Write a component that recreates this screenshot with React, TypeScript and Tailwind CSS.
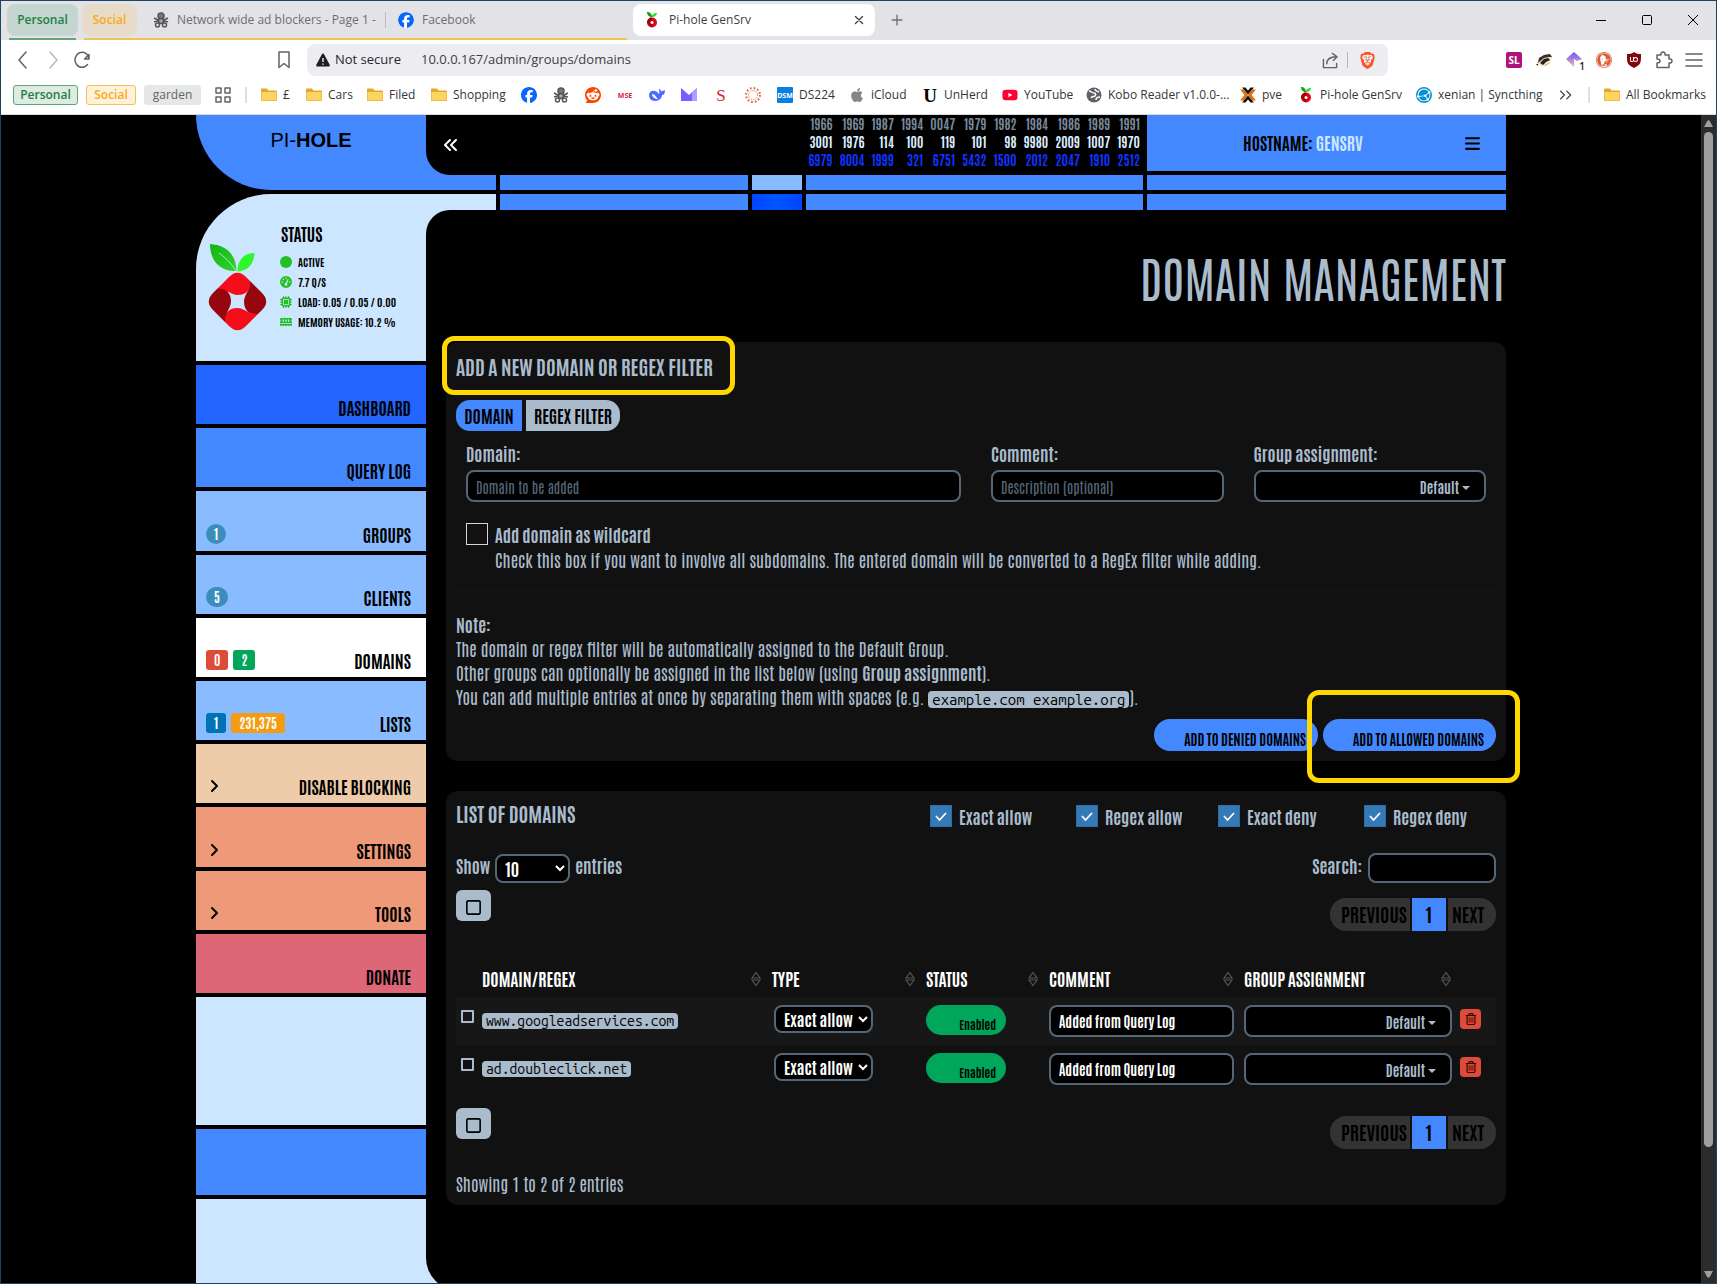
import type { ReactNode } from 'react';
import clsx from 'clsx';
import {
  FaAngleRight,
  FaAnglesLeft,
  FaApple,
  FaBars,
  FaCircle,
  FaFacebook,
  FaGaugeHigh,
  FaMemory,
  FaMicrochip,
  FaReddit,
  FaRegSquare,
  FaRegTrashCan,
  FaYoutube,
} from 'react-icons/fa6';
import { SiBrave, SiDuckduckgo, SiSyncthing, SiUblockorigin } from 'react-icons/si';

/* ---------- icons ---------- */

function PiholeLogo({ className }: { className?: string }) {
  const petal = 'M9 45 L21 33 Q29.5 24.500 38 33 L42 37 C43 45 39 51 29.5 51 C23 51 19 45 9 45z';
  return (
    <svg className={className} viewBox="0 0 59 87" aria-hidden="true">
      <defs>
        <linearGradient id="leaf" x1="0" y1="0" x2="1" y2="1">
          <stop offset="0" stopColor="#12b212" />
          <stop offset="1" stopColor="#2fd52f" />
        </linearGradient>
      </defs>
      <path d="M2 0C17 1 28 9 28.500 27L25 27C10 26 2 15 2 0z" fill="url(#leaf)" />
      <path d="M11 9C18 14 24 20 28 27" fill="none" stroke="#cce6ff" strokeWidth="0.8" />
      <path d="M46.500 9C46 20 40 27 29.500 27.500C29.500 16 36 9 46.500 9z" fill="#2cf82c" />
      <path d={petal} fill="#96060c" transform="rotate(90 29.500 57.500)" />
      <path d={petal} fill="#f60d1a" />
      <path d={petal} fill="#f60d1a" transform="rotate(180 29.500 57.500)" />
      <path d={petal} fill="#96060c" transform="rotate(270 29.500 57.500)" />
    </svg>
  );
}

function PiholeMark() {
  return (
    <svg className="size-4" viewBox="-2 0 16 16" aria-hidden="true">
      <path d="M1 0c3 0 5 2 5 5C3 5 1 3 1 0z" fill="#10a010" />
      <path d="M11 1c0 2-2 4-5 4 0-3 2-4 5-4z" fill="#2ce02c" />
      <circle cx="6" cy="10.500" r="5" fill="#e0061a" />
      <path d="M6 5.500a5 5 0 0 0-5 5L6 15.500z" fill="#96060c" />
      <circle cx="6" cy="10.500" r="1.500" fill="#fff" />
    </svg>
  );
}

function FolderIcon() {
  return (
    <svg className="size-4" viewBox="0 0 16 16" aria-hidden="true">
      <path d="M0 2.500Q0 1.500 1 1.500H6L7.500 3.500H15Q16 3.500 16 4.500V13Q16 14 15 14H1Q0 14 0 13z" fill="#e0a92e" />
      <path d="M.5 5H15.500V13.500H.5z" fill="#fcd462" />
    </svg>
  );
}

function EngineIcon() {
  return (
    <svg className="size-4" viewBox="0 0 16 16" aria-hidden="true" fill="none" stroke="#555" strokeWidth="1.500">
      <circle cx="8" cy="4" r="3" fill="#777" />
      <circle cx="8" cy="9" r="2.500" fill="#aaa" />
      <path d="M1 6l4 2M15 6l-4 2M1 10l4-1M15 10l-4-1" />
      <circle cx="4.500" cy="13" r="2" />
      <circle cx="11.500" cy="13" r="2" />
    </svg>
  );
}

function WhaleIcon() {
  return (
    <svg className="size-4" viewBox="0 0 16 16" aria-hidden="true">
      <path
        d="M0 8c0-3 3-5 6-4 2 .5 3 2 4 3 1-1 0-3 0-5 1 0 2 1 2 2 1 .5 2 0 4-1 0 3-1 5-3 5 0 3-3 6-7 6-4 0-6-3-6-6z"
        fill="#4d6bfe"
      />
      <path d="M3 7c3 0 4 3 6 5-3 0-6-2-6-5z" fill="#fff" />
    </svg>
  );
}

function MailIcon() {
  return (
    <svg className="size-4" viewBox="0 0 16 16" aria-hidden="true">
      <path d="M0 1l8 7 8-7v13H0z" fill="#7a5cff" />
      <path d="M11 6l5-5v13h-5z" fill="#b39cff" />
    </svg>
  );
}

function DottedCircleIcon() {
  return (
    <svg className="size-4" viewBox="0 0 16 16" aria-hidden="true" fill="none" stroke="#e06c3a">
      <circle cx="8" cy="8" r="7" strokeWidth="2" strokeDasharray="1.800 1.900" />
      <circle cx="8" cy="8" r="4.500" strokeDasharray="1 1" />
    </svg>
  );
}

function KoboIcon() {
  return (
    <svg className="size-4" viewBox="0 0 16 16" aria-hidden="true">
      <circle cx="8" cy="8" r="7.500" fill="#5f6368" />
      <path d="M3 4c2 0 3 2 5 2s2 2 1 3-3 0-4 2M9 2c0 2 2 2 4 3M10 13c0-2 1-3 4-3" stroke="#fff" strokeWidth="1.500" fill="none" />
    </svg>
  );
}

function ProxmoxIcon() {
  return (
    <svg className="size-4" viewBox="0 0 16 16" aria-hidden="true">
      <path d="M0 2.500h3.500L8 8l-4.500 5.500H0L4.500 8zM16 2.500h-3.500L8 8l4.500 5.500H16L11.500 8z" fill="#e57000" />
      <path d="M2 .5h3.500L8 3.500 10.500.5H14L8 7.500zM2 15.500h3.500L8 12.500l2.500 3H14L8 8.500z" fill="#111" />
    </svg>
  );
}

function BadgerIcon() {
  return (
    <svg className="size-4" viewBox="0 0 16 16" aria-hidden="true">
      <path d="M0 12L3 6l5-3 6-1 2 3-2 6-5 3-8-1z" fill="#f3e3c8" />
      <path d="M3 6l5-3 6-1 2 3-3 0-5 1-6 5z" fill="#3b3028" />
      <path d="M4 11l4-4 4-1 2 2-4 2-3 3z" fill="#222" />
      <path d="M0 12l2 0 0 2z" fill="#222" />
      <path d="M9 13l4-2 1 0-5 3z" fill="#d89a3a" />
    </svg>
  );
}

function PrismIcon() {
  return (
    <svg className="size-4" viewBox="0 0 16 16" aria-hidden="true">
      <defs>
        <linearGradient id="prism" x1="0" y1="0" x2="0" y2="1">
          <stop offset="0" stopColor="#5b5bff" />
          <stop offset="1" stopColor="#ffb3b3" />
        </linearGradient>
      </defs>
      <path d="M8 0l8 7-5 2-3-2v8L0 7z" fill="url(#prism)" />
    </svg>
  );
}

function LetterIcon({ children, className }: { children: ReactNode; className: string }) {
  return (
    <span className={clsx('flex size-4 items-center justify-center leading-none', className)} aria-hidden="true">
      {children}
    </span>
  );
}

type LineProps = { className?: string; d: string };

function Line({ className, d }: LineProps) {
  return (
    <svg
      className={className}
      viewBox="0 0 18 18"
      fill="none"
      stroke="currentColor"
      strokeWidth="1.500"
      strokeLinejoin="round"
      strokeLinecap="round"
      aria-hidden="true"
    >
      <path d={d} />
    </svg>
  );
}

/* ---------- browser window ---------- */

function TabStrip() {
  return (
    <div className="flex h-[39px] items-start bg-[#e3e2e7] pt-[3px] pl-[6px] text-[12px] text-[#6d6e73]">
      <div className="flex h-9 w-[71px] flex-col justify-between">
        <button className="h-8 rounded-lg bg-[#c5d5d0] font-semibold text-[#1e8040]">Personal</button>
        <span className="mx-[2px] h-[2px] bg-[#5fa777]" />
      </div>
      <div className="ml-1 flex h-9 w-[545px] flex-col justify-between">
        <div className="flex h-8 items-center whitespace-nowrap">
          <button className="h-8 w-[55px] rounded-lg bg-[#e6dcc9] font-semibold text-[#f9ab14]">Social</button>
          <button className="ml-4 flex items-center gap-2">
            <EngineIcon />
            <span className="w-[203px] text-left">Network wide ad blockers - Page 1 -</span>
          </button>
          <span className="ml-[5px] h-4 w-px bg-[#bdbcc2]" />
          <button className="ml-3 flex items-center gap-2">
            <FaFacebook className="size-4 rounded-full bg-white text-[#0866ff]" />
            Facebook
          </button>
        </div>
        <span className="ml-[2px] h-[2px] bg-[#f0c24f]" />
      </div>
      <div className="ml-[6px] flex h-8 w-[242px] items-center rounded-lg bg-white pr-2 pl-[11px] text-[#404145]">
        <PiholeMark />
        <span className="ml-[9px] flex-1">Pi-hole GenSrv</span>
        <button className="flex size-4 items-center justify-center" aria-label="Close tab">
          <Line className="size-4" d="M5 5l8 8M13 5l-8 8" />
        </button>
      </div>
      <button className="ml-3 flex h-8 w-5 items-center justify-center" aria-label="New tab">
        <Line className="size-4" d="M9 3.500v11M3.500 9h11" />
      </button>
      <div className="ml-auto flex h-8 items-center gap-[30px] pr-[15px] text-black">
        <button aria-label="Minimize">
          <svg className="size-4" viewBox="0 0 16 16">
            <path d="M3 8.500h10" stroke="currentColor" />
          </svg>
        </button>
        <button aria-label="Maximize">
          <svg className="size-4" viewBox="0 0 16 16">
            <rect x="3.500" y="3.500" width="9" height="9" rx="1" fill="none" stroke="currentColor" />
          </svg>
        </button>
        <button aria-label="Close">
          <svg className="size-4" viewBox="0 0 16 16">
            <path d="M3 3l10 10M13 3L3 13" stroke="currentColor" />
          </svg>
        </button>
      </div>
    </div>
  );
}

function Toolbar() {
  return (
    <div className="flex h-10 items-center bg-white pr-[14px] pl-[13px] text-[#5f6368]">
      <button className="w-5" aria-label="Back">
        <Line className="size-[18px]" d="M12 1L5 9l7 8" />
      </button>
      <button className="ml-[10px] w-5 text-[#b9babd]" aria-label="Forward">
        <Line className="size-[18px]" d="M6 1l7 8-7 8" />
      </button>
      <button className="ml-[9px]" aria-label="Reload">
        <Line className="size-[18px]" d="M16 8A7 7.500 0 1 0 14.500 13.500M16 3.500v4.500h-4.500z" />
      </button>
      <button className="ml-[184px]" aria-label="Bookmark this page">
        <Line className="size-[18px]" d="M4 1h10v15.500l-5-4-5 4z" />
      </button>
      <div className="ml-[14px] flex h-8 w-[1081px] items-center rounded-lg bg-[#edecf1] pr-3 pl-[9px] text-[13px] text-[#27282b]">
        <svg className="size-[14px]" viewBox="0 0 14 14" aria-hidden="true">
          <path d="M7 .5Q7.700.5 8.200 1.500L13.800 12Q14 13.500 12.800 13.500H1.200Q0 13.500.2 12L5.800 1.500Q6.300.5 7 .5z" fill="#1f1f23" />
          <path d="M7 5v4M7 10.500v1.300" stroke="#fff" strokeWidth="1.300" />
        </svg>
        <span className="ml-[5px] w-[86px]">Not secure</span>
        <input
          className="min-w-0 flex-1 bg-transparent text-[#3f4043] outline-none"
          aria-label="Address"
          defaultValue="10.0.0.167/admin/groups/domains"
        />
        <button className="text-[#5f6368]" aria-label="Share">
          <Line className="size-[17px]" d="M1.500 8v8.500h14V12M5 12.500c0-5 3-7 9-7.500M11 1.500l5 3.500-4 4" />
        </button>
        <span className="mx-2 h-4 w-px bg-[#b5b5ba]" />
        <button className="ml-[3px]" aria-label="Brave Shields">
          <SiBrave className="size-[17px] text-[#fb542b]" />
        </button>
      </div>
      <div className="ml-auto flex items-center gap-[14px]">
        <LetterIcon className="rounded-[2px] bg-[#b0127b] text-[10px] font-bold text-white">SL</LetterIcon>
        <BadgerIcon />
        <span className="relative">
          <PrismIcon />
          <span className="absolute top-[7px] right-[-3px] text-[10px] font-semibold text-[#27282b]">1</span>
        </span>
        <SiDuckduckgo className="size-4 text-[#de5833]" />
        <SiUblockorigin className="size-4 text-[#800610]" />
        <button className="-mx-px" aria-label="Extensions">
          <Line className="size-[18px]" d="M2 4h4c-1-4 5-4 4 0h4v4c4-1 4 5 0 4v4.500H2v-4.500c4 0 4-4 0-4z" />
        </button>
        <button className="-mx-px" aria-label="Menu">
          <Line className="size-[18px]" d="M1 3h16M1 9h16M1 15h16" />
        </button>
      </div>
    </div>
  );
}

type Bookmark = { id: string; icon: ReactNode; label?: string; width?: string };

const BOOKMARKS: Bookmark[] = [
  { id: 'pound', icon: <FolderIcon />, label: '£', width: 'w-[7px]' },
  { id: 'cars', icon: <FolderIcon />, label: 'Cars', width: 'w-[23px]' },
  { id: 'filed', icon: <FolderIcon />, label: 'Filed', width: 'w-[26px]' },
  { id: 'shopping', icon: <FolderIcon />, label: 'Shopping', width: 'w-[52px]' },
  { id: 'facebook', icon: <FaFacebook className="size-4 text-[#0866ff]" /> },
  { id: 'engine', icon: <EngineIcon /> },
  { id: 'reddit', icon: <FaReddit className="size-4 text-[#ff4500]" /> },
  { id: 'mse', icon: <LetterIcon className="text-[7px] font-bold text-[#d81e3a]">MSE</LetterIcon> },
  { id: 'whale', icon: <WhaleIcon /> },
  { id: 'mail', icon: <MailIcon /> },
  {
    id: 's',
    icon: <LetterIcon className="font-['Liberation_Serif',serif] text-[17px] text-[#d8232f]">S</LetterIcon>,
  },
  { id: 'dots', icon: <DottedCircleIcon /> },
  {
    id: 'ds224',
    icon: <LetterIcon className="rounded-[1px] bg-[#0b7fe0] text-[7px] font-bold text-white">DSM</LetterIcon>,
    label: 'DS224',
    width: 'w-[34px]',
  },
  { id: 'icloud', icon: <FaApple className="size-4 text-[#85868a]" />, label: 'iCloud', width: 'w-[35px]' },
  {
    id: 'unherd',
    icon: <LetterIcon className="font-['Liberation_Serif',serif] text-[19px] font-bold text-black">U</LetterIcon>,
    label: 'UnHerd',
    width: 'w-[42px]',
  },
  { id: 'youtube', icon: <FaYoutube className="size-4 text-[#f03]" />, label: 'YouTube', width: 'w-[46px]' },
  { id: 'kobo', icon: <KoboIcon />, label: 'Kobo Reader v1.0.0-...', width: 'w-[116px]' },
  { id: 'pve', icon: <ProxmoxIcon />, label: 'pve', width: 'w-[20px]' },
  { id: 'pihole', icon: <PiholeMark />, label: 'Pi-hole GenSrv', width: 'w-[80px]' },
  {
    id: 'syncthing',
    icon: <SiSyncthing className="size-4 text-[#0891d1]" />,
    label: 'xenian | Syncthing',
    width: 'w-[96px]',
  },
];

function BookmarksBar() {
  return (
    <div className="flex h-[35px] items-center border-b border-[#dadade] bg-white pr-[15px] pb-1 pl-3 text-[12px] whitespace-nowrap text-[#35363a]">
      <a href="#" className="flex h-5 w-[65px] items-center justify-center rounded-[3px] border border-[#5fa777] bg-[#deebe2] font-semibold text-[#1e8040]">
        Personal
      </a>
      <a href="#" className="ml-2 flex h-5 w-[50px] items-center justify-center rounded-[3px] border border-[#f0c24f] bg-[#fdf1dc] font-semibold text-[#f9ab14]">
        Social
      </a>
      <a href="#" className="ml-2 flex h-5 w-[57px] items-center justify-center rounded-[3px] bg-[#e6e8e7] text-[#5f6368]">
        garden
      </a>
      <Line
        className="ml-[13px] size-[18px] text-[#5f6368]"
        d="M2 2h5v5H2zM11 2h5v5h-5zM2 11h5v5H2zM11 11h5v5h-5z"
      />
      <span className="mr-[14px] ml-[13px] h-4 w-[2px] bg-[#dfdfe3]" />
      <div className="flex flex-1 items-center gap-4">
        {BOOKMARKS.map(({ id, icon, label, width }) => (
          <a key={id} href="#" className="flex items-center gap-[6px]" aria-label={label ?? id}>
            {icon}
            {label && <span className={width}>{label}</span>}
          </a>
        ))}
      </div>
      <button className="mr-[15px]" aria-label="More bookmarks">
        <Line className="size-[14px] text-[#35363a]" d="M2 4l5 5-5 5M10 4l5 5-5 5" />
      </button>
      <span className="mr-[14px] h-4 w-[2px] bg-[#dfdfe3]" />
      <a href="#" className="flex items-center gap-[6px]">
        <FolderIcon />
        <span className="w-[75px]">All Bookmarks</span>
      </a>
    </div>
  );
}

function Scrollbar() {
  return (
    <div className="flex w-[15px] flex-col items-center bg-[#2c2c2c] py-1" aria-hidden="true">
      <svg className="h-2 w-[9px]" viewBox="0 0 9 8">
        <path d="M0 8L3.500 1.500h2L9 8z" fill="#9f9f9f" />
      </svg>
      <span className="mt-[5px] h-[1015px] w-[9px] rounded-full bg-[#9f9f9f]" />
      <svg className="mt-auto h-2 w-[9px]" viewBox="0 0 9 8">
        <path d="M0 0h9L5.500 6.500h-2z" fill="#9f9f9f" />
      </svg>
    </div>
  );
}

/* ---------- pi-hole header ---------- */

const DATA_ROWS = [
  {
    color: 'text-[#778899]',
    values: ['1966', '1969', '1987', '1994', '0047', '1979', '1982', '1984', '1986', '1989', '1991'],
  },
  {
    color: 'text-[#ddeeff]',
    values: ['3001', '1976', '114', '100', '119', '101', '98', '9980', '2009', '1007', '1970'],
  },
  {
    color: 'text-[#1133ff]',
    values: ['6979', '8004', '1999', '321', '6751', '5432', '1500', '2012', '2047', '1910', '2512'],
  },
];

function Bars({ lower }: { lower?: boolean }) {
  return (
    <div className={clsx('flex gap-1', lower ? 'h-4' : 'h-[15px]')}>
      <span className={clsx('w-[70px]', lower ? 'bg-[#cce6ff]' : 'bg-[#4488ff]')} />
      <span className="flex-1 bg-[#4488ff]" />
      <span className={clsx('w-[50px]', lower ? 'bg-linear-to-r from-[#0044ff] via-[#0055ff] to-[#0044ff]' : 'bg-[#88bbff]')} />
      <span className="w-[337px] bg-[#4488ff]" />
      <span className="w-[359px] bg-[#4488ff]" />
    </div>
  );
}

function Header() {
  return (
    <header className="flex">
      <div className="h-[75px] w-[230px] rounded-bl-[75px] bg-[#4488ff] text-center font-['Liberation_Sans',sans-serif] text-[20px] leading-[50px] text-black">
        PI-<b>HOLE</b>
      </div>
      <div className="flex-1">
        <div className="flex">
          <div className="flex-1 bg-[#4488ff]">
            <div className="flex h-[60px] justify-between rounded-bl-[24px] bg-black pr-[7px] pl-[17px]">
              <button className="h-[60px] text-white" aria-label="Toggle sidebar">
                <FaAnglesLeft className="size-4" />
              </button>
              <table className="h-[54px] text-right text-[13px] leading-[18px] font-bold">
                <tbody>
                  {DATA_ROWS.map(({ color, values }) => (
                    <tr key={values[0]} className={color}>
                      {values.map((value) => (
                        <td key={value} className="py-0 pr-0 pl-[7px]">
                          {value}
                        </td>
                      ))}
                    </tr>
                  ))}
                </tbody>
              </table>
            </div>
          </div>
          <div className="flex h-14 w-[359px] items-center bg-[#4488ff] pr-[25px] text-[17px] font-bold text-black">
            <span className="flex-1 pl-[96px]">
              HOSTNAME: <span className="text-[#cce6ff]">GENSRV</span>
            </span>
            <button aria-label="Open menu">
              <FaBars className="size-[17px]" />
            </button>
          </div>
        </div>
        <Bars />
      </div>
    </header>
  );
}

/* ---------- sidebar ---------- */

const STATUS = [
  { icon: <FaCircle className="size-3" />, text: 'ACTIVE' },
  { icon: <FaGaugeHigh className="size-3" />, text: '7.7 Q/S' },
  { icon: <FaMicrochip className="size-3" />, text: 'LOAD: 0.05 / 0.05 / 0.00' },
  { icon: <FaMemory className="size-3" />, text: 'MEMORY USAGE: 10.2 %' },
];

type NavItem = {
  label: string;
  bg: string;
  arrow?: boolean;
  badges?: { text: string; cls: string }[];
};

const NAV: NavItem[] = [
  { label: 'Dashboard', bg: 'bg-[#2266ff]' },
  { label: 'Query Log', bg: 'bg-[#4488ff]' },
  { label: 'Groups', bg: 'bg-[#88bbff]', badges: [{ text: '1', cls: 'rounded-full bg-[#3c8dbc]' }] },
  { label: 'Clients', bg: 'bg-[#88bbff]', badges: [{ text: '5', cls: 'rounded-full bg-[#3c8dbc]' }] },
  {
    label: 'Domains',
    bg: 'bg-white',
    badges: [
      { text: '0', cls: 'rounded-[3px] bg-[#dd4b39]' },
      { text: '2', cls: 'rounded-[3px] bg-[#00a65a]' },
    ],
  },
  {
    label: 'Lists',
    bg: 'bg-[#88bbff]',
    badges: [
      { text: '1', cls: 'rounded-[3px] bg-[#0073b7]' },
      { text: '231,375', cls: 'rounded-[3px] bg-[#f39c12]' },
    ],
  },
  { label: 'Disable Blocking', bg: 'bg-[#eeccaa]', arrow: true },
  { label: 'Settings', bg: 'bg-[#ee9977]', arrow: true },
  { label: 'Tools', bg: 'bg-[#ee9977]', arrow: true },
  { label: 'Donate', bg: 'bg-[#dd6677]' },
];

function Sidebar() {
  return (
    <aside className="flex w-[230px] flex-col gap-1 text-black uppercase">
      <section className="flex h-[167px] rounded-tl-[75px] bg-[#cce6ff] pt-5 pl-3">
        <PiholeLogo className="mt-[30px] h-[87px] w-[59px]" />
        <div className="ml-[13px]">
          <h2 className="pl-px text-[17px] leading-[38px] font-bold">Status</h2>
          <ul className="text-[11px] leading-5 font-bold">
            {STATUS.map(({ icon, text }) => (
              <li key={text} className="flex items-center gap-[6px]">
                <span className="text-[#22c022]">{icon}</span>
                {text}
              </li>
            ))}
          </ul>
        </div>
      </section>
      <nav className="grid h-[628px] grid-rows-10 gap-1">
        {NAV.map(({ label, bg, arrow, badges }) => (
          <a key={label} href="#" className={clsx('flex items-end justify-between pr-[15px] pb-[5px] pl-[10px]', bg)}>
            <span className="flex h-6 items-center gap-[5px]">
              {arrow && <FaAngleRight className="size-4" />}
              {badges?.map(({ text, cls }) => (
                <span
                  key={text}
                  className={clsx('h-5 px-2 text-[13px] leading-[19px] font-bold text-white', cls)}
                >
                  {text}
                </span>
              ))}
            </span>
            <span className="text-[17px] leading-6 font-bold">{label}</span>
          </a>
        ))}
      </nav>
      <span className="h-32 bg-[#cce6ff]" />
      <span className="h-[66px] bg-[#4488ff]" />
      <span className="h-[91px] bg-[#cce6ff]" />
    </aside>
  );
}

/* ---------- form pieces ---------- */

const field = 'w-full rounded-lg border-2 border-[#556677] bg-black';

function GroupSelect({ id, label }: { id: string; label?: string }) {
  return (
    <div className="grid items-center">
      <select
        id={id}
        aria-label={label}
        className={clsx(
          field,
          'h-8 appearance-none pt-[2px] pr-[25px] text-[14px] font-bold text-[#aabbcc] [grid-area:1/1] [text-align-last:right]',
        )}
      >
        <option>Default</option>
      </select>
      <svg className="pointer-events-none mt-1 mr-4 h-1 w-2 justify-self-end [grid-area:1/1]" viewBox="0 0 8 4">
        <path d="M0 0h8L4 4z" fill="#aabbcc" />
      </svg>
    </div>
  );
}

function FilterCheckbox({ id, label }: { id: string; label: string }) {
  return (
    <div className="flex items-center gap-[7px]">
      <span className="grid place-items-center">
        <input
          id={id}
          type="checkbox"
          defaultChecked
          className="size-[22px] appearance-none border border-[#2e6da4] bg-[#337ab7] [grid-area:1/1]"
        />
        <svg className="pointer-events-none size-3 [grid-area:1/1]" viewBox="0 0 12 12">
          <path d="M1 6l3.500 4L11 3" fill="none" stroke="#fff" strokeWidth="1.800" />
        </svg>
      </span>
      <label htmlFor={id} className="text-[17px] leading-6 font-bold">
        {label}
      </label>
    </div>
  );
}

function Pagination() {
  return (
    <div className="mt-2 flex h-[33px] gap-[2px] text-[19px] font-bold text-black">
      <button disabled className="w-20 rounded-l-2xl bg-[#333] pl-2 uppercase">
        Previous
      </button>
      <button className="w-[34px] bg-[#4488ff]">1</button>
      <button disabled className="w-12 rounded-r-2xl bg-[#333] pr-2 uppercase">
        Next
      </button>
    </div>
  );
}

function TableActions() {
  return (
    <div className="flex items-start justify-between">
      <button className="flex h-[31px] w-[35px] items-center justify-center rounded-md bg-[#aabbcc] pt-1 text-black" aria-label="Select all">
        <FaRegSquare className="size-[17px]" />
      </button>
      <Pagination />
    </div>
  );
}

/* ---------- panels ---------- */

function Code({ children, className }: { children: ReactNode; className: string }) {
  return (
    <code className={clsx("rounded-[4px] bg-[#aabbcc] px-1 font-['Ubuntu_Mono','DejaVu_Sans_Mono',monospace] leading-[18px] text-black", className)}>
      {children}
    </code>
  );
}

function AddDomainPanel() {
  return (
    <section className="relative rounded-xl bg-[#111] p-[10px]">
      <h2 className="mb-[20px] text-[20px] leading-[28px] font-bold uppercase">Add a new domain or regex filter</h2>
      <div className="flex h-[31px] gap-1 text-[17px] font-bold text-black">
        <button className="w-[66px] rounded-l-[14px] bg-[#4488ff] uppercase">Domain</button>
        <button className="w-[94px] rounded-r-[14px] bg-[#aabbcc] uppercase">Regex filter</button>
      </div>
      <form className="mt-[10px]">
        <div className="grid grid-cols-4 gap-x-[30px] px-[10px]">
          <div className="col-span-2">
            <label htmlFor="domain" className="mb-[5px] block leading-6 font-bold">
              Domain:
            </label>
            <input
              id="domain"
              placeholder="Domain to be added"
              className={clsx(field, 'block h-8 px-2 pt-[2px] text-[14px] placeholder:text-[#556677]')}
            />
          </div>
          <div>
            <label htmlFor="comment" className="mb-[5px] block leading-6 font-bold">
              Comment:
            </label>
            <input
              id="comment"
              placeholder="Description (optional)"
              className={clsx(field, 'block h-8 px-2 pt-[2px] text-[14px] placeholder:text-[#556677]')}
            />
          </div>
          <div>
            <label htmlFor="group" className="mb-[5px] block leading-6 font-bold">
              Group assignment:
            </label>
            <GroupSelect id="group" />
          </div>
        </div>
        <div className="mt-[19px] flex gap-[7px] px-[10px]">
          <input id="wildcard" type="checkbox" className="mt-[2px] size-[22px] appearance-none border border-[#d2d6de]" />
          <div>
            <label htmlFor="wildcard" className="block leading-[26px] font-bold">
              Add domain as wildcard
            </label>
            <p className="leading-6">
              Check this box if you want to involve all subdomains. The entered domain will be converted to a RegEx
              filter while adding.
            </p>
          </div>
        </div>
        <hr className="mt-5 mb-5 border-[#151515]" />
        <div className="leading-6">
          <p className="font-bold">Note:</p>
          <p>The domain or regex filter will be automatically assigned to the Default Group.</p>
          <p>
            Other groups can optionally be assigned in the list below (using <b>Group assignment</b>).
          </p>
          <p>
            You can add multiple entries at once by separating them with spaces (e.g.{' '}
            <Code className="text-[15px]">example.com example.org</Code>).
          </p>
        </div>
        <div className="mt-[10px] flex justify-end gap-[5px] text-[14px] font-bold text-black">
          <button type="button" className="h-8 w-[164px] rounded-2xl bg-[#4488ff] pt-2 pr-3 text-right uppercase">
            Add to denied domains
          </button>
          <button type="button" className="h-8 w-[173px] rounded-2xl bg-[#4488ff] pt-2 pr-3 text-right uppercase">
            Add to allowed domains
          </button>
        </div>
      </form>
      <span className="pointer-events-none absolute top-[-6px] left-[-4px] h-[59px] w-[293px] rounded-xl border-5 border-[#ffd800]" />
      <span className="pointer-events-none absolute right-[-14px] bottom-[-22px] h-[93px] w-[213px] rounded-xl border-5 border-[#ffd800]" />
    </section>
  );
}

const COLUMNS = [
  { label: 'Domain/Regex', width: 'w-[290px]' },
  { label: 'Type', width: 'w-[154px]' },
  { label: 'Status', width: 'w-[123px]' },
  { label: 'Comment', width: 'w-[195px]' },
  { label: 'Group assignment', width: 'w-[218px]' },
];

const DOMAINS = ['www.googleadservices.com', 'ad.doubleclick.net'];

function SortIcon() {
  return (
    <svg className="h-4 w-[10px]" viewBox="0 0 10 16" fill="none" stroke="#555" strokeWidth="1.200" aria-hidden="true">
      <path d="M1 7l4-5.500L9 7zM1 9l4 5.500L9 9z" />
    </svg>
  );
}

function DomainTable() {
  return (
    <table className="mt-[30px] mb-[15px] w-full table-fixed text-left">
      <thead>
        <tr className="h-9 text-[17px] text-white uppercase">
          <th className="w-[21px] p-0" aria-label="Select" />
          {COLUMNS.map(({ label, width }) => (
            <th key={label} className={clsx('py-0 pr-[6px] pl-[5px] font-bold', width)}>
              <span className="flex items-center justify-between">
                {label}
                <SortIcon />
              </span>
            </th>
          ))}
          <th className="p-0" aria-label="Actions" />
        </tr>
      </thead>
      <tbody>
        {DOMAINS.map((domain) => (
          <tr key={domain} className="h-12 odd:bg-[#171717] [&>td]:px-[5px] [&>td]:pt-2 [&>td]:align-top">
            <td>
              <input
                type="checkbox"
                aria-label={`Select ${domain}`}
                className="mt-[5px] block size-[13px] appearance-none rounded-[1px] border-2 border-[#aabbcc]"
              />
            </td>
            <td>
              <Code className="text-[14px]">{domain}</Code>
            </td>
            <td>
              <select
                aria-label={`Type of ${domain}`}
                className="ml-[2px] block h-[28px] w-[99px] rounded-lg border-2 border-[#556677] bg-black pl-1 text-[16px] font-bold text-white"
              >
                <option>Exact allow</option>
              </select>
            </td>
            <td>
              <button className="block h-[30px] w-20 rounded-2xl bg-[#00a65a] pt-2 pr-[10px] text-right text-[12px] font-bold text-black">
                Enabled
              </button>
            </td>
            <td>
              <input
                aria-label={`Comment for ${domain}`}
                defaultValue="Added from Query Log"
                className={clsx(field, 'block h-8 px-2 text-[14px] font-bold text-white')}
              />
            </td>
            <td>
              <GroupSelect id={`group-${domain}`} label={`Groups of ${domain}`} />
            </td>
            <td>
              <button
                className="mt-1 ml-[-2px] flex h-5 w-[21px] items-center justify-center rounded-[4px] bg-[#dd4b39] text-[#300]"
                aria-label={`Delete ${domain}`}
              >
                <FaRegTrashCan className="size-3" />
              </button>
            </td>
          </tr>
        ))}
      </tbody>
    </table>
  );
}

function DomainListPanel() {
  return (
    <section className="mt-[30px] rounded-xl bg-[#111] px-[10px] pt-[7px] pb-[10px]">
      <div className="mb-[25px] flex h-[30px] items-center justify-between">
        <h2 className="text-[20px] leading-[30px] font-bold uppercase">List of domains</h2>
        <div className="grid grid-cols-[146px_142px_146px_132px] pt-[6px]">
          <FilterCheckbox id="exact-allow" label="Exact allow" />
          <FilterCheckbox id="regex-allow" label="Regex allow" />
          <FilterCheckbox id="exact-deny" label="Exact deny" />
          <FilterCheckbox id="regex-deny" label="Regex deny" />
        </div>
      </div>
      <div className="mb-[7px] flex h-[30px] items-center justify-between font-bold">
        <label className="flex items-center gap-[5px]">
          <span className="pb-1">Show</span>
          <select className="h-[29px] w-[75px] rounded-lg border-2 border-[#556677] bg-black pl-1 text-[17px] font-bold text-white">
            <option>10</option>
          </select>
          <span className="pb-1">entries</span>
        </label>
        <label className="flex items-center gap-[6px]">
          <span className="pb-1">Search:</span>
          <input type="search" className="h-[30px] w-32 rounded-lg border-2 border-[#556677] bg-black px-2" />
        </label>
      </div>
      <TableActions />
      <DomainTable />
      <TableActions />
      <p className="mt-[22px] leading-6">Showing 1 to 2 of 2 entries</p>
    </section>
  );
}

export default function App() {
  return (
    <div className="flex h-screen flex-col overflow-hidden border border-[#1c4463] bg-black font-['Open_Sans',sans-serif]">
      <TabStrip />
      <Toolbar />
      <BookmarksBar />
      <div className="flex min-h-0 flex-1 overflow-hidden">
        <div className="min-w-0 flex-1 overflow-hidden font-['Antonio','Roboto_Condensed',sans-serif] text-[17px] text-[#aabbcc]">
          <div className="mx-auto max-w-[1310px]">
            <Header />
            <div className="mt-1 flex">
              <Sidebar />
              <div className="flex flex-1 flex-col">
                <Bars lower />
                <div className="flex-1 bg-[#cce6ff]">
                  <main className="h-full rounded-tl-[24px] rounded-bl-[32px] bg-black pt-[37px] pl-5">
                    <h1 className="mb-[35px] text-right text-[48px] leading-[60px] uppercase">Domain management</h1>
                    <AddDomainPanel />
                    <DomainListPanel />
                  </main>
                </div>
              </div>
            </div>
          </div>
        </div>
        <Scrollbar />
      </div>
    </div>
  );
}
